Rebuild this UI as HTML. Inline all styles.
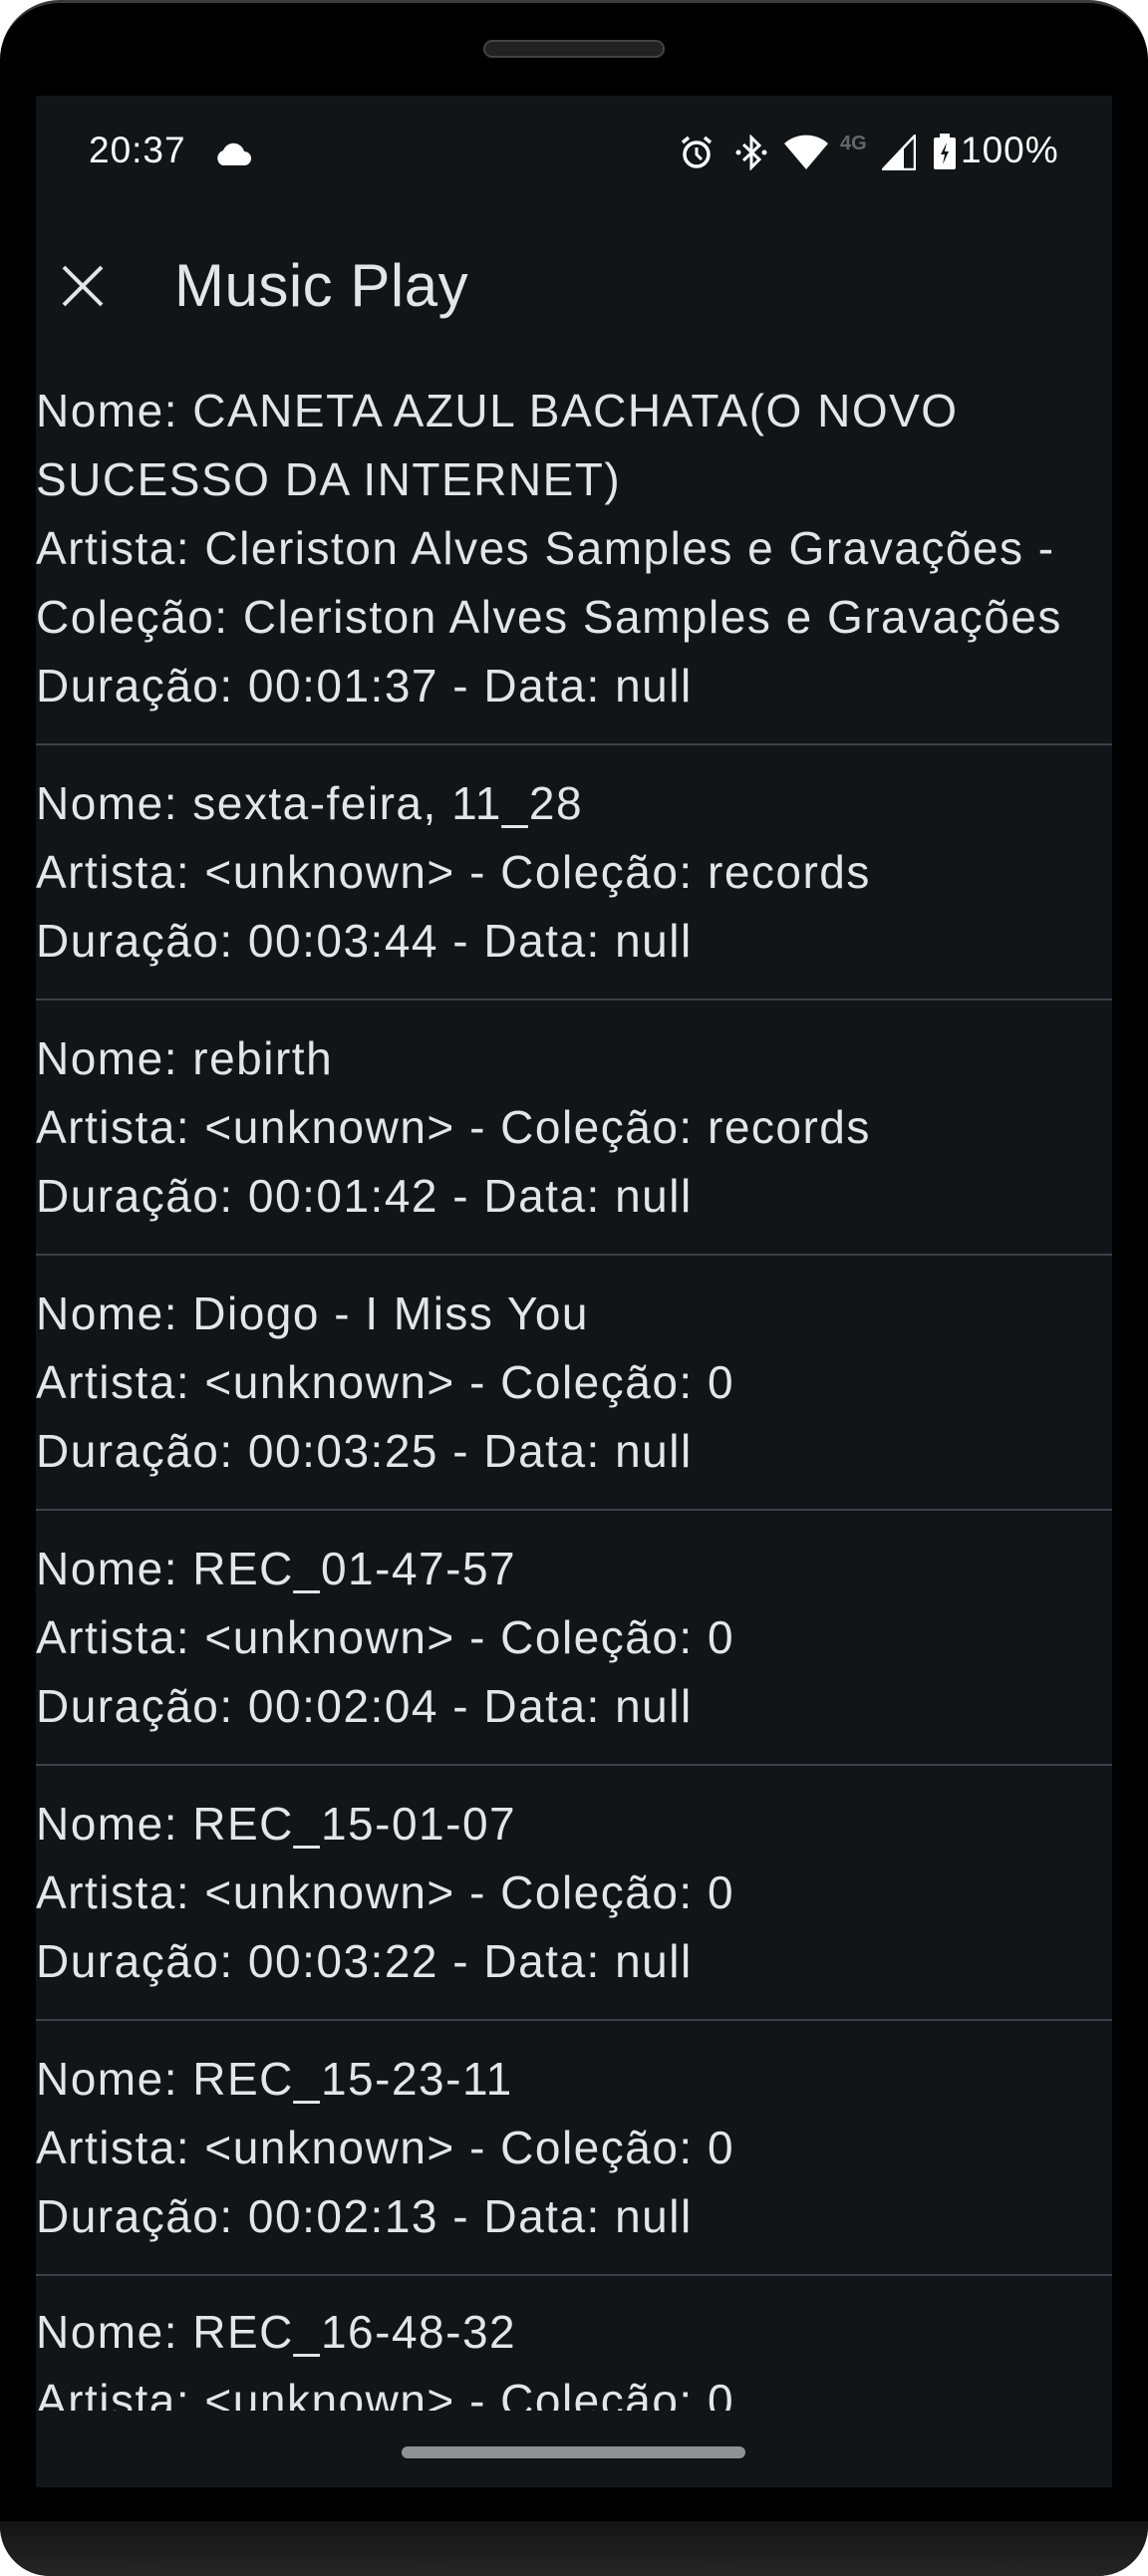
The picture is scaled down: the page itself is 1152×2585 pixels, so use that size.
<!DOCTYPE html>
<html><head><meta charset="utf-8"><style>
*{margin:0;padding:0;box-sizing:border-box}
html,body{width:1152px;height:2585px;background:#fff;overflow:hidden}
#phone{position:absolute;left:0;top:0;width:1152px;height:2585px;background:#000;border-radius:60px 60px 50px 50px;border-top:3px solid #3a3a3a;overflow:hidden}
#chin{position:absolute;left:0;top:2527px;width:1152px;height:58px;background:linear-gradient(#141414,#262626);border-radius:0 0 50px 50px}
#grille{position:absolute;left:485px;top:37px;width:182px;height:18px;border-radius:9px;background:#222;border:2px solid #444}
#screen{position:absolute;left:36px;top:93px;width:1080px;height:2400px;background:#111518;overflow:hidden;font-family:"Liberation Sans",sans-serif;color:#e3e5e8}
.st{position:absolute;font-size:37px;color:#fff;letter-spacing:1px}
#title{position:absolute;left:139px;top:156px;font-size:60px;color:#e3e5e8;letter-spacing:0.5px}
#list{position:absolute;left:0;top:258px;width:1080px}
.it{padding:24px 0 23px 0;border-bottom:2px solid #3c4146;font-size:46px;line-height:69px;white-space:nowrap;letter-spacing:1.5px}
#pill{position:absolute;left:367px;top:2359px;width:345px;height:12px;border-radius:6px;background:#909193}
</style></head><body>
<div id="phone">
<div id="grille"></div>
<div id="screen">
<div class="st" style="left:53px;top:34px">20:37</div>
<svg style="position:absolute;left:177px;top:45px" width="40" height="26" viewBox="0 0 40 26"><path d="M10 25 H32 A7 7 0 0 0 32 11 A11 11 0 0 0 11 10 A8 8 0 0 0 10 25Z" fill="#fff"/></svg>
<svg style="position:absolute;left:646px;top:39px" width="34" height="36" viewBox="0 0 34 36"><circle cx="17" cy="20" r="12" fill="none" stroke="#fff" stroke-width="3.5"/><path d="M17 13V20L22 25" stroke="#fff" stroke-width="3" fill="none"/><path d="M3 8L9 3M31 8L25 3" stroke="#fff" stroke-width="3.5"/></svg>
<svg style="position:absolute;left:702px;top:39px" width="32" height="36" viewBox="0 0 32 36"><path d="M8 10L24 25L16 33V3L24 11L8 26" stroke="#fff" stroke-width="3" fill="none"/><circle cx="3" cy="18" r="2.5" fill="#fff"/><circle cx="29" cy="18" r="2.5" fill="#fff"/></svg>
<svg style="position:absolute;left:750px;top:39px" width="46" height="36" viewBox="0 0 46 36"><path d="M23 35L1 9A33 33 0 0 1 45 9Z" fill="#fff"/></svg>
<div style="position:absolute;left:807px;top:37px;font-size:20px;font-weight:bold;color:#666">4G</div>
<svg style="position:absolute;left:849px;top:39px" width="34" height="36" viewBox="0 0 34 36"><path d="M33 1V35H1Z" fill="none" stroke="#fff" stroke-width="2.5"/><path d="M1 35H22V13Z" fill="#fff"/></svg>
<svg style="position:absolute;left:901px;top:38px" width="22" height="36" viewBox="0 0 22 36"><rect x="0" y="4" width="22" height="32" rx="2" fill="#fff"/><rect x="6" y="0" width="10" height="5" fill="#fff"/><path d="M13 9L7 21H11L9 31L15 18H11Z" fill="#111518"/></svg>
<div class="st" style="left:928px;top:34px">100%</div>
<svg style="position:absolute;left:26px;top:170px" width="42" height="42" viewBox="0 0 42 42"><path d="M2 2L40 40M40 2L2 40" stroke="#e3e5e8" stroke-width="4"/></svg>
<div id="title">Music Play</div>
<div id="list">
<div class="it">Nome: CANETA AZUL BACHATA(O NOVO<br>SUCESSO DA INTERNET)<br>Artista: Cleriston Alves Samples e Gravações -<br>Coleção: Cleriston Alves Samples e Gravações<br>Duração: 00:01:37 - Data: null</div>
<div class="it">Nome: sexta-feira, 11_28<br>Artista: &lt;unknown&gt; - Coleção: records<br>Duração: 00:03:44 - Data: null</div>
<div class="it">Nome: rebirth<br>Artista: &lt;unknown&gt; - Coleção: records<br>Duração: 00:01:42 - Data: null</div>
<div class="it">Nome: Diogo - I Miss You<br>Artista: &lt;unknown&gt; - Coleção: 0<br>Duração: 00:03:25 - Data: null</div>
<div class="it">Nome: REC_01-47-57<br>Artista: &lt;unknown&gt; - Coleção: 0<br>Duração: 00:02:04 - Data: null</div>
<div class="it">Nome: REC_15-01-07<br>Artista: &lt;unknown&gt; - Coleção: 0<br>Duração: 00:03:22 - Data: null</div>
<div class="it">Nome: REC_15-23-11<br>Artista: &lt;unknown&gt; - Coleção: 0<br>Duração: 00:02:13 - Data: null</div>
</div>
<div style="position:absolute;left:0;top:2186px;width:1080px;height:137px;overflow:hidden">
<div class="it" style="border:none">Nome: REC_16-48-32<br>Artista: &lt;unknown&gt; - Coleção: 0<br>Duração: 00:02:13 - Data: null</div>
</div>
<div id="pill"></div>
</div>
<div id="chin"></div>
</div>
</body></html>
